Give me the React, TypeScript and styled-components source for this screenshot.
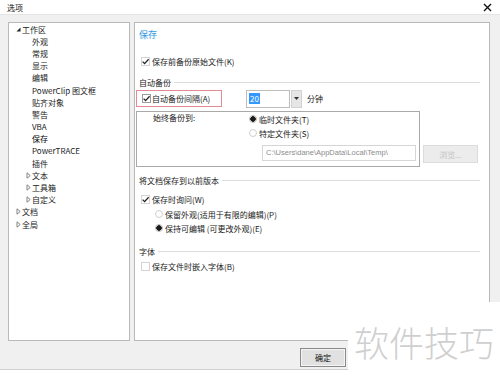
import React from "react";
import styled, { createGlobalStyle } from "styled-components";

const GlobalStyle = createGlobalStyle`
  html, body {
    margin: 0;
    padding: 0;
    background: #fff;
  }
  body {
    font-family: "Noto Sans CJK SC", "Liberation Sans", sans-serif;
    font-size: 8px;
    color: #1a1a1a;
  }
`;

type TreeItem = { label: string; level: number; arrow?: "open" | "closed"; selected?: boolean };

const tree: TreeItem[] = [
  { label: "工作区", level: 0, arrow: "open" },
  { label: "外观", level: 1 },
  { label: "常规", level: 1 },
  { label: "显示", level: 1 },
  { label: "编辑", level: 1 },
  { label: "PowerClip 图文框", level: 1 },
  { label: "贴齐对象", level: 1 },
  { label: "警告", level: 1 },
  { label: "VBA", level: 1 },
  { label: "保存", level: 1, selected: true },
  { label: "PowerTRACE", level: 1 },
  { label: "插件", level: 1 },
  { label: "文本", level: 1, arrow: "closed" },
  { label: "工具箱", level: 1, arrow: "closed" },
  { label: "自定义", level: 1, arrow: "closed" },
  { label: "文档", level: 0, arrow: "closed" },
  { label: "全局", level: 0, arrow: "closed" },
];

function TreeArrow({ kind }: { kind?: "open" | "closed" }) {
  if (kind === "open") {
    return (
      <svg width="7" height="7" viewBox="0 0 7 7">
        <polygon points="5.5,1.5 5.5,5.5 1.5,5.5" fill="#222" />
      </svg>
    );
  }
  if (kind === "closed") {
    return (
      <svg width="7" height="7" viewBox="0 0 7 7">
        <polygon points="2,0.8 5.2,3.5 2,6.2" fill="none" stroke="#777" strokeWidth="0.9" />
      </svg>
    );
  }
  return null;
}

function CheckMark() {
  return (
    <svg width="9" height="9" viewBox="0 0 9 9">
      <polyline points="1.6,4.6 3.6,6.6 7.6,2.2" fill="none" stroke="#222" strokeWidth="1.3" />
    </svg>
  );
}

function App() {
  return (
    <>
      <GlobalStyle />
      <Window>
        <TitleBar>
          <span>选项</span>
          <svg width="9" height="9" viewBox="0 0 9 9">
            <path d="M1 1 L8 8 M8 1 L1 8" stroke="#111" strokeWidth="1.4" />
          </svg>
        </TitleBar>

        <Body>
          <TreePanel>
            {tree.map((item) => (
              <TreeRow key={item.label} $selected={item.selected} $level={item.level}>
                <ArrowSlot>
                  <TreeArrow kind={item.arrow} />
                </ArrowSlot>
                <span>{item.label}</span>
              </TreeRow>
            ))}
          </TreePanel>

          <SettingsPanel>
            <SectionTitle>保存</SectionTitle>

            <CheckRow $mt={8}>
              <CheckBox $faint>
                <CheckMark />
              </CheckBox>
              <span>保存前备份原始文件(K)</span>
            </CheckRow>

            <GroupHeader $mt={6}>
              <span>自动备份</span>
            </GroupHeader>

            <IntervalRow>
              <HighlightFrame>
                <CheckBox>
                  <CheckMark />
                </CheckBox>
                <span>自动备份间隔(A)</span>
              </HighlightFrame>
              <SpinField>
                <Selected>20</Selected>
              </SpinField>
              <SpinButton>
                <svg width="5" height="3" viewBox="0 0 5 3">
                  <polygon points="0,0 5,0 2.5,3" fill="#333" />
                </svg>
              </SpinButton>
              <Unit>分钟</Unit>
            </IntervalRow>

            <InsetRow>
              <InsetBox>
                <LabelCol>始终备份到:</LabelCol>
                <OptionCol>
                  <RadioRow>
                    <Radio $on />
                    <span>临时文件夹(T)</span>
                  </RadioRow>
                  <RadioRow>
                    <Radio />
                    <span>特定文件夹(S)</span>
                  </RadioRow>
                  <PathField>C:\Users\dane\AppData\Local\Temp\</PathField>
                </OptionCol>
              </InsetBox>
              <BrowseButton>浏览...</BrowseButton>
            </InsetRow>

            <GroupHeader $mt={6}>
              <span>将文档保存到以前版本</span>
            </GroupHeader>

            <CheckRow $mt={4}>
              <CheckBox $faint>
                <CheckMark />
              </CheckBox>
              <span>保存时询问(W)</span>
            </CheckRow>

            <SubRadioRow>
              <Radio />
              <span>保留外观(适用于有限的编辑)(P)</span>
            </SubRadioRow>
            <SubRadioRow>
              <Radio $on />
              <span>保持可编辑 (可更改外观)(E)</span>
            </SubRadioRow>

            <GroupHeader $mt={9}>
              <span>字体</span>
            </GroupHeader>

            <CheckRow $mt={0}>
              <CheckBox $faint />
              <span>保存文件时嵌入字体(B)</span>
            </CheckRow>
          </SettingsPanel>
        </Body>

        <Footer>
          <DialogButton>确定</DialogButton>
        </Footer>
        <BottomStrip />

        <Watermark>软件技巧</Watermark>
      </Window>
    </>
  );
}

export default App;

const Window = styled.div`
  position: relative;
  width: 500px;
  height: 376px;
  overflow: hidden;
  display: flex;
  flex-direction: column;
  background: #f0f0f0;
`;

const TitleBar = styled.div`
  height: 15px;
  flex-shrink: 0;
  display: flex;
  align-items: center;
  justify-content: space-between;
  padding: 0 8px 0 7px;
  background: #fff;
  border-bottom: 1px solid #e4e4e4;
  box-sizing: border-box;
  font-size: 8px;
  color: #111;
`;

const Body = styled.div`
  display: flex;
  gap: 4px;
  height: 319px;
  margin-top: 7px;
  padding: 0 10px 0 8px;
`;

const TreePanel = styled.div`
  width: 122px;
  box-sizing: border-box;
  background: #fff;
  border: 1px solid #b9b9b9;
  display: flex;
  flex-direction: column;
`;

const TreeRow = styled.div<{ $level: number; $selected?: boolean }>`
  height: 12.2px;
  display: flex;
  align-items: center;
  padding-left: ${(p) => 6 + p.$level * 10}px;
  color: ${(p) => (p.$selected ? "#000" : "#222")};
  white-space: nowrap;
`;

const ArrowSlot = styled.span`
  width: 7px;
  height: 7px;
  display: inline-flex;
  flex-shrink: 0;
`;

const SettingsPanel = styled.div`
  flex: 1;
  box-sizing: border-box;
  background: #fff;
  border: 1px solid #b9b9b9;
  display: flex;
  flex-direction: column;
  padding: 0 9px 0 4px;
`;

const SectionTitle = styled.div`
  height: 22px;
  display: flex;
  align-items: center;
  font-size: 9px;
  color: #3a9ae0;
  text-shadow: 0 0 3px #d2ebff;
`;

const CheckRow = styled.div<{ $mt: number }>`
  margin-top: ${(p) => p.$mt}px;
  height: 16px;
  display: flex;
  align-items: center;
  gap: 2px;
  padding-left: 2px;
`;

const CheckBox = styled.span<{ $faint?: boolean }>`
  width: 9px;
  height: 9px;
  box-sizing: border-box;
  border: 1px solid ${(p) => (p.$faint ? "#d4d4d4" : "#9a9a9a")};
  background: #fff;
  display: inline-flex;
  align-items: center;
  justify-content: center;
  flex-shrink: 0;
  svg {
    margin: -1px;
  }
`;

const GroupHeader = styled.div<{ $mt: number }>`
  margin-top: ${(p) => p.$mt}px;
  height: 14px;
  display: flex;
  align-items: center;
  gap: 3px;
  color: #222;
  &::after {
    content: "";
    flex: 1;
    height: 1px;
    background: #dddddd;
  }
`;

const IntervalRow = styled.div`
  height: 19px;
  display: flex;
  align-items: center;
`;

const HighlightFrame = styled.div`
  width: 86px;
  height: 17px;
  box-sizing: border-box;
  margin-left: -3px;
  margin-right: 24px;
  border: 1px solid #e48a94;
  display: flex;
  align-items: center;
  gap: 1px;
  padding-left: 5px;
`;

const SpinField = styled.div`
  width: 44px;
  height: 18px;
  box-sizing: border-box;
  border: 1px solid #bdbdbd;
  display: flex;
  align-items: center;
  padding-left: 2px;
`;

const Selected = styled.span`
  background: #3399ff;
  color: #fff;
  padding: 0 1px;
  line-height: 11px;
`;

const SpinButton = styled.div`
  width: 11px;
  height: 18px;
  box-sizing: border-box;
  margin-left: 1px;
  background: #e6e6e6;
  border: 1px solid #d2d2d2;
  display: flex;
  align-items: center;
  justify-content: center;
`;

const Unit = styled.span`
  margin-left: 5px;
`;

const InsetRow = styled.div`
  display: flex;
  align-items: flex-end;
  gap: 3px;
  margin-top: 3px;
  margin-left: -3px;
`;

const InsetBox = styled.div`
  width: 284px;
  height: 56px;
  box-sizing: border-box;
  border: 1px solid #a9a9a9;
  display: flex;
`;

const LabelCol = styled.div`
  width: 112px;
  box-sizing: border-box;
  padding-left: 16px;
  line-height: 12px;
`;

const OptionCol = styled.div`
  display: flex;
  flex-direction: column;
`;

const RadioRow = styled.div`
  height: 14px;
  display: flex;
  align-items: center;
  gap: 2px;
`;

const Radio = styled.span<{ $on?: boolean }>`
  width: 8px;
  height: 8px;
  box-sizing: border-box;
  border-radius: 50%;
  border: 1px solid ${(p) => (p.$on ? "#bbb" : "#d0d0d0")};
  background: ${(p) => (p.$on ? "radial-gradient(circle, #1a1a1a 0 2.6px, #fff 3px)" : "#fff")};
  flex-shrink: 0;
`;

const PathField = styled.div`
  margin: 5px 0 0 13px;
  width: 154px;
  height: 16px;
  box-sizing: border-box;
  border: 1px solid #d6d6d6;
  padding-left: 3px;
  line-height: 14px;
  font-family: "Liberation Sans", sans-serif;
  font-size: 7.5px;
  color: #8c8c8c;
  white-space: nowrap;
`;

const BrowseButton = styled.div`
  width: 55px;
  height: 18px;
  margin-bottom: 4px;
  box-sizing: border-box;
  background: #ececec;
  border: 1px solid #dcdcdc;
  color: #c4c4c4;
  display: flex;
  align-items: center;
  justify-content: center;
`;

const SubRadioRow = styled.div`
  height: 14px;
  display: flex;
  align-items: center;
  gap: 2px;
  padding-left: 16px;
`;

const Footer = styled.div`
  height: 29px;
  flex-shrink: 0;
  box-sizing: border-box;
  display: flex;
  justify-content: flex-end;
  align-items: flex-start;
  padding: 7px 154px 0 0;
  border-bottom: 1px solid #d0d0d0;
`;

const DialogButton = styled.div`
  width: 46px;
  height: 19px;
  box-sizing: border-box;
  background: #e1e1e1;
  border: 1px solid #8a8a8a;
  box-shadow: inset 0 0 0 1px #f4f4f4;
  display: flex;
  align-items: center;
  justify-content: center;
  color: #111;
`;

const BottomStrip = styled.div`
  flex: 1;
  background: #fff;
`;

const Watermark = styled.div`
  position: absolute;
  right: 0;
  bottom: 0;
  width: 152px;
  height: 74px;
  box-sizing: border-box;
  padding-top: 4px;
  background: #fff;
  display: flex;
  align-items: center;
  justify-content: center;
  font-size: 35px;
  font-weight: 300;
  color: #cfcfcf;
  white-space: nowrap;
`;
